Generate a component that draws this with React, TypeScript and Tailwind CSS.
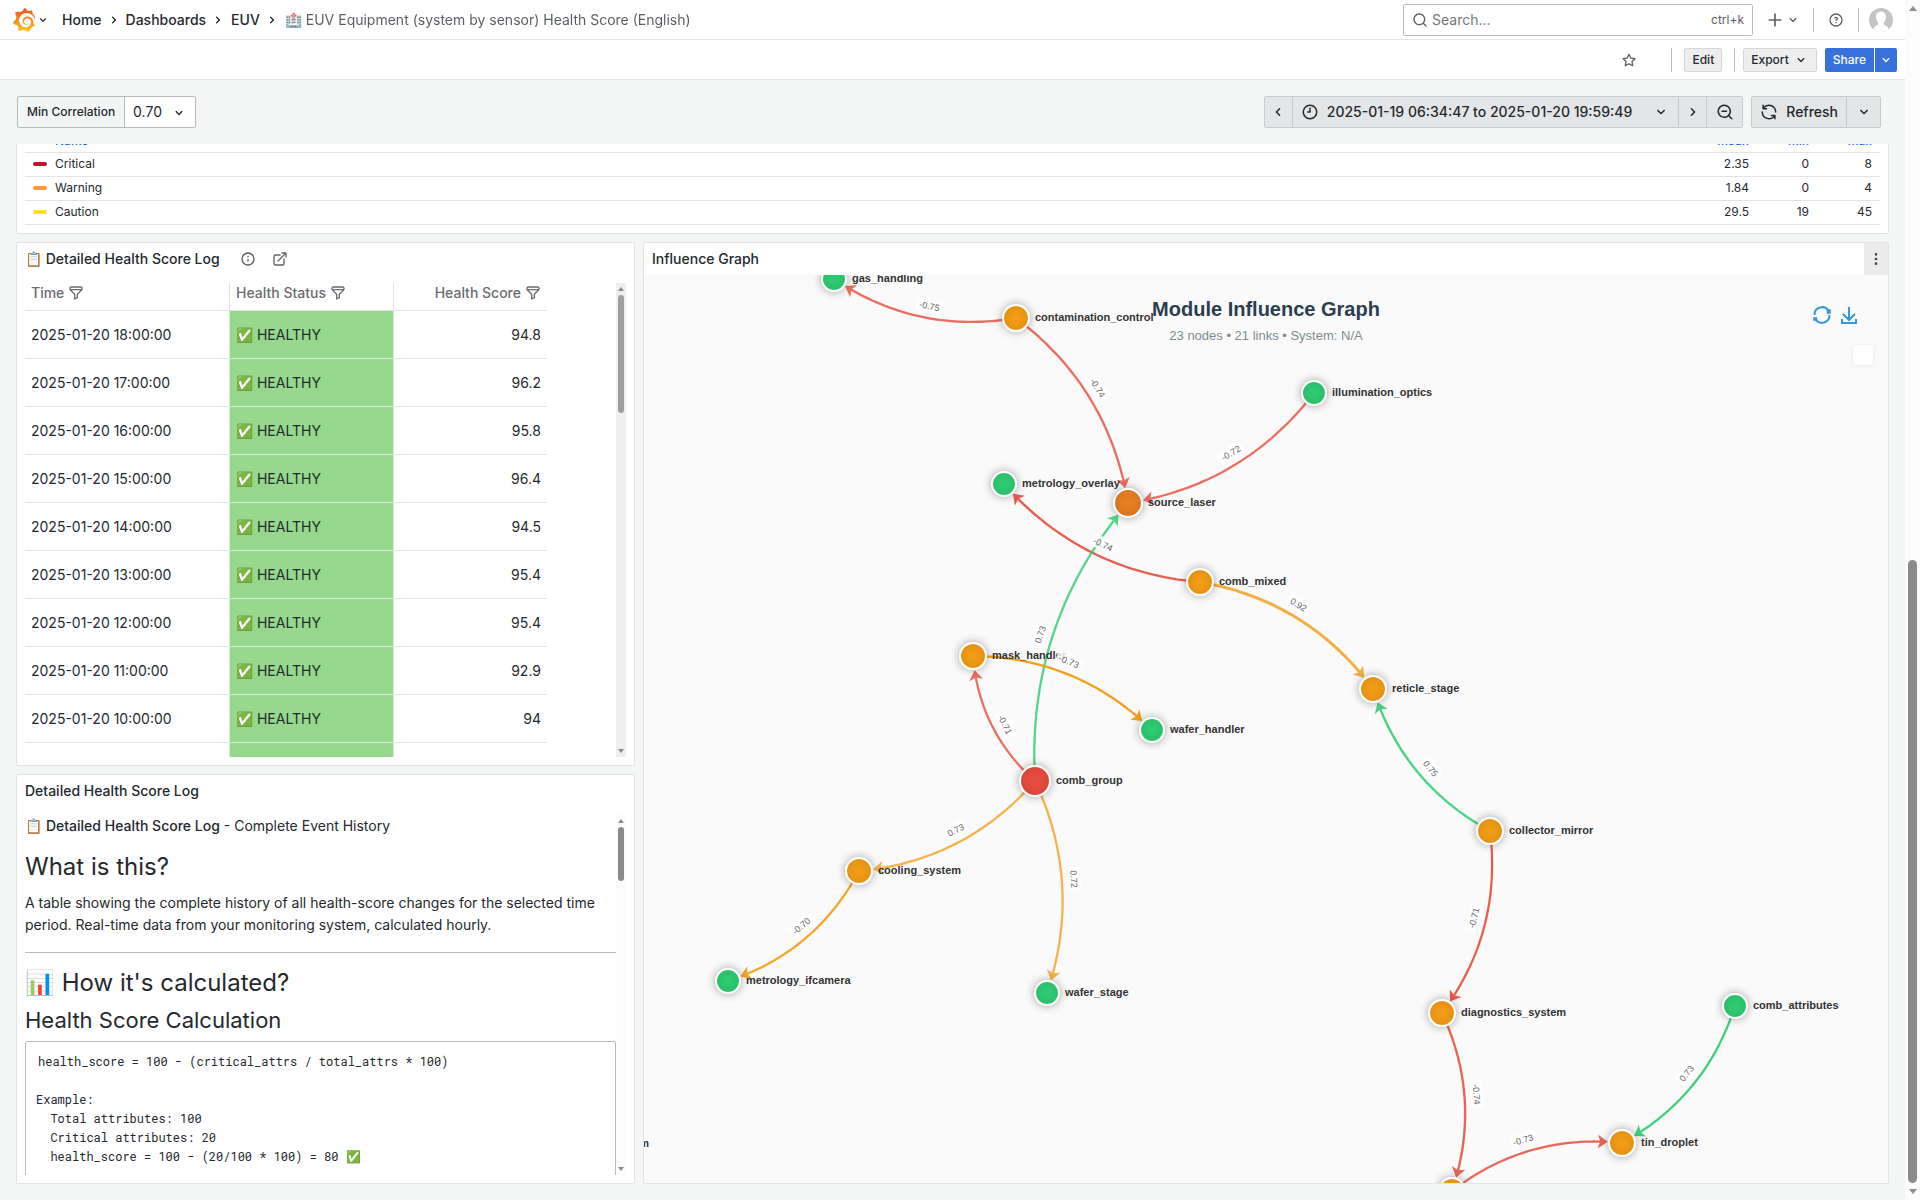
import { ReactNode } from 'react'
import { SiGrafana } from 'react-icons/si'

type GraphNode = { id: string; x: number; y: number; r: number; color: string }
type GraphEdge = { from: string; to: string; value: string; color: string; opacity: number }

const GREEN = '#2ecc71'
const ORANGE = '#f39c12'
const DARK_ORANGE = '#e67e22'
const RED = '#e74c3c'

const ICONS = {
  angleDown:
    'M17,9.17a1,1,0,0,0-1.41,0L12,12.71,8.46,9.17a1,1,0,0,0-1.41,0,1,1,0,0,0,0,1.42l4.24,4.24a1,1,0,0,0,1.42,0L17,10.59A1,1,0,0,0,17,9.17Z',
  angleLeft:
    'M11.29,12l3.54-3.54a1,1,0,0,0,0-1.41,1,1,0,0,0-1.42,0L9.17,11.29a1,1,0,0,0,0,1.42L13.41,17a1,1,0,0,0,.71.29,1,1,0,0,0,.71-.29,1,1,0,0,0,0-1.41Z',
  angleRight:
    'M14.83,11.29,10.59,7.05a1,1,0,0,0-1.42,0,1,1,0,0,0,0,1.41L12.71,12,9.17,15.54a1,1,0,0,0,0,1.41,1,1,0,0,0,.71.29,1,1,0,0,0,.71-.29l4.24-4.24A1,1,0,0,0,14.83,11.29Z',
  search:
    'M21.71,20.29,18,16.61A9,9,0,1,0,16.61,18l3.68,3.68a1,1,0,0,0,1.42,0A1,1,0,0,0,21.71,20.29ZM11,18a7,7,0,1,1,7-7A7,7,0,0,1,11,18Z',
  searchMinus:
    'M21.71,20.29,18,16.61A9,9,0,1,0,16.61,18l3.68,3.68a1,1,0,0,0,1.42,0A1,1,0,0,0,21.71,20.29ZM11,18a7,7,0,1,1,7-7A7,7,0,0,1,11,18ZM14,10H8a1,1,0,0,0,0,2h6a1,1,0,0,0,0-2Z',
  plus: 'M19,11H13V5a1,1,0,0,0-2,0v6H5a1,1,0,0,0,0,2h6v6a1,1,0,0,0,2,0V13h6a1,1,0,0,0,0-2Z',
  question:
    'M11.29,15.29a1.58,1.58,0,0,0-.12.15.76.76,0,0,0-.09.18.64.64,0,0,0-.06.18,1.36,1.36,0,0,0,0,.2.84.84,0,0,0,.08.38.9.9,0,0,0,.54.54.94.94,0,0,0,.76,0,.9.9,0,0,0,.54-.54A1,1,0,0,0,13,16a1,1,0,0,0-.29-.71A1,1,0,0,0,11.29,15.29ZM12,2A10,10,0,1,0,22,12,10,10,0,0,0,12,2Zm0,18a8,8,0,1,1,8-8A8,8,0,0,1,12,20ZM12,7A3,3,0,0,0,9.4,8.5a1,1,0,1,0,1.73,1A1,1,0,0,1,12,9a1,1,0,0,1,0,2,1,1,0,1,0,0,2,3,3,0,0,0,0-6Z',
  star: 'M22,9.67A1,1,0,0,0,21.14,9l-5.69-.83L12.9,3a1,1,0,0,0-1.8,0L8.55,8.16,2.86,9a1,1,0,0,0-.81.68,1,1,0,0,0,.25,1l4.13,4-1,5.68A1,1,0,0,0,6.9,21.44L12,18.77l5.1,2.67a.93.93,0,0,0,.46.12,1,1,0,0,0,.59-.19,1,1,0,0,0,.4-1l-1-5.68,4.13-4A1,1,0,0,0,22,9.67Zm-6.15,4a1,1,0,0,0-.29.88l.72,4.2-3.76-2a1.06,1.06,0,0,0-.94,0l-3.76,2,.72-4.2a1,1,0,0,0-.29-.88l-3-3,4.21-.61a1,1,0,0,0,.76-.55L12,5.7l1.88,3.82a1,1,0,0,0,.76.55l4.21.61Z',
  clock:
    'M12,2A10,10,0,1,0,22,12,10,10,0,0,0,12,2Zm0,18a8,8,0,1,1,8-8A8,8,0,0,1,12,20ZM12,6a1,1,0,0,0-1,1v4H9a1,1,0,0,0,0,2h3a1,1,0,0,0,1-1V7A1,1,0,0,0,12,6Z',
  sync: 'M19.91,15.51H15.38a1,1,0,0,0,0,2h2.4A8,8,0,0,1,4,12a1,1,0,0,0-2,0,10,10,0,0,0,16.88,7.23V21a1,1,0,0,0,2,0V16.5A1,1,0,0,0,19.91,15.51ZM12,2A10,10,0,0,0,5.12,4.77V3a1,1,0,0,0-2,0V7.5a1,1,0,0,0,1,1h4.5a1,1,0,0,0,0-2H6.22A8,8,0,0,1,20,12a1,1,0,0,0,2,0A10,10,0,0,0,12,2Z',
  filter:
    'M19,2H5A3,3,0,0,0,2,5V6.17a3,3,0,0,0,.25,1.2l0,.06a2.81,2.81,0,0,0,.59.86L9,14.41V21a1,1,0,0,0,.47.85A1,1,0,0,0,10,22a1,1,0,0,0,.45-.11l4-2A1,1,0,0,0,15,19V14.41l6.12-6.12a2.81,2.81,0,0,0,.59-.86l0-.06A3,3,0,0,0,22,6.17V5A3,3,0,0,0,19,2ZM13.29,13.29A1,1,0,0,0,13,14v4.38l-2,1V14a1,1,0,0,0-.29-.71L5.41,8H18.59ZM20,6H4V5A1,1,0,0,1,5,4H19a1,1,0,0,1,1,1Z',
  info: 'M12,2A10,10,0,1,0,22,12,10,10,0,0,0,12,2Zm0,18a8,8,0,1,1,8-8A8,8,0,0,1,12,20Zm0-8.5a1,1,0,0,0-1,1v3a1,1,0,0,0,2,0v-3A1,1,0,0,0,12,11.5Zm0-4a1.25,1.25,0,1,0,1.25,1.25A1.25,1.25,0,0,0,12,7.5Z',
  external:
    'M18,10.82a1,1,0,0,0-1,1V19a1,1,0,0,1-1,1H5a1,1,0,0,1-1-1V8A1,1,0,0,1,5,7h7.18a1,1,0,0,0,0-2H5A3,3,0,0,0,2,8V19a3,3,0,0,0,3,3H16a3,3,0,0,0,3-3V11.82A1,1,0,0,0,18,10.82Zm3.92-8.2a1,1,0,0,0-.54-.54A1,1,0,0,0,21,2H15a1,1,0,0,0,0,2h3.59L8.29,14.29a1,1,0,0,0,0,1.42,1,1,0,0,0,1.42,0L20,5.41V9a1,1,0,0,0,2,0V3A1,1,0,0,0,21.92,2.62Z',
  menu: 'M12,7a2,2,0,1,0-2-2A2,2,0,0,0,12,7Zm0,10a2,2,0,1,0,2,2A2,2,0,0,0,12,17Zm0-7a2,2,0,1,0,2,2A2,2,0,0,0,12,10Z',
}

const legend = [
  { name: 'Critical', swatch: 'bg-[#c4162a]', mean: '2.35', min: '0', max: '8' },
  { name: 'Warning', swatch: 'bg-[#ff9830]', mean: '1.84', min: '0', max: '4' },
  { name: 'Caution', swatch: 'bg-[#fade2a]', mean: '29.5', min: '19', max: '45' },
]

const logRows = [
  { time: '2025-01-20 18:00:00', score: '94.8' },
  { time: '2025-01-20 17:00:00', score: '96.2' },
  { time: '2025-01-20 16:00:00', score: '95.8' },
  { time: '2025-01-20 15:00:00', score: '96.4' },
  { time: '2025-01-20 14:00:00', score: '94.5' },
  { time: '2025-01-20 13:00:00', score: '95.4' },
  { time: '2025-01-20 12:00:00', score: '95.4' },
  { time: '2025-01-20 11:00:00', score: '92.9' },
  { time: '2025-01-20 10:00:00', score: '94' },
]

const nodes: GraphNode[] = [
  { id: 'gas_handling', x: 190, y: 4, r: 12, color: GREEN },
  { id: 'contamination_control', x: 372, y: 43, r: 13, color: ORANGE },
  { id: 'illumination_optics', x: 670, y: 118, r: 12, color: GREEN },
  { id: 'metrology_overlay', x: 360, y: 209, r: 12, color: GREEN },
  { id: 'source_laser', x: 484, y: 228, r: 14, color: DARK_ORANGE },
  { id: 'comb_mixed', x: 556, y: 307, r: 13, color: ORANGE },
  { id: 'mask_handler', x: 329, y: 381, r: 13, color: ORANGE },
  { id: 'reticle_stage', x: 729, y: 414, r: 13, color: ORANGE },
  { id: 'wafer_handler', x: 508, y: 455, r: 12, color: GREEN },
  { id: 'comb_group', x: 391, y: 506, r: 15, color: RED },
  { id: 'collector_mirror', x: 846, y: 556, r: 13, color: ORANGE },
  { id: 'cooling_system', x: 215, y: 596, r: 13, color: ORANGE },
  { id: 'metrology_ifcamera', x: 84, y: 706, r: 12, color: GREEN },
  { id: 'wafer_stage', x: 403, y: 718, r: 12, color: GREEN },
  { id: 'diagnostics_system', x: 798, y: 738, r: 13, color: ORANGE },
  { id: 'comb_attributes', x: 1091, y: 731, r: 12, color: GREEN },
  { id: 'tin_droplet', x: 978, y: 868, r: 13, color: ORANGE },
  { id: 'vacuum_system', x: 808, y: 916, r: 13, color: ORANGE },
]

const edges: GraphEdge[] = [
  { from: 'contamination_control', to: 'gas_handling', value: '-0.75', color: RED, opacity: 0.8 },
  { from: 'contamination_control', to: 'source_laser', value: '-0.74', color: RED, opacity: 0.8 },
  { from: 'illumination_optics', to: 'source_laser', value: '-0.72', color: RED, opacity: 0.8 },
  { from: 'comb_mixed', to: 'metrology_overlay', value: '-0.74', color: RED, opacity: 0.9 },
  { from: 'comb_group', to: 'source_laser', value: '0.73', color: GREEN, opacity: 0.8 },
  { from: 'comb_mixed', to: 'reticle_stage', value: '0.92', color: ORANGE, opacity: 0.8 },
  { from: 'mask_handler', to: 'wafer_handler', value: '-0.73', color: ORANGE, opacity: 0.95 },
  { from: 'comb_group', to: 'mask_handler', value: '-0.71', color: RED, opacity: 0.8 },
  { from: 'comb_group', to: 'cooling_system', value: '0.73', color: ORANGE, opacity: 0.75 },
  { from: 'comb_group', to: 'wafer_stage', value: '0.72', color: ORANGE, opacity: 0.75 },
  { from: 'cooling_system', to: 'metrology_ifcamera', value: '-0.70', color: ORANGE, opacity: 0.9 },
  { from: 'collector_mirror', to: 'reticle_stage', value: '0.75', color: GREEN, opacity: 0.85 },
  { from: 'collector_mirror', to: 'diagnostics_system', value: '-0.71', color: RED, opacity: 0.9 },
  { from: 'diagnostics_system', to: 'vacuum_system', value: '-0.74', color: RED, opacity: 0.85 },
  { from: 'vacuum_system', to: 'tin_droplet', value: '-0.73', color: RED, opacity: 0.85 },
  { from: 'comb_attributes', to: 'tin_droplet', value: '0.73', color: GREEN, opacity: 0.9 },
]

const CURVENESS = 0.2

function edgeGeometry(edge: GraphEdge) {
  const a = nodes.find((n) => n.id === edge.from)!
  const b = nodes.find((n) => n.id === edge.to)!
  const cx = (a.x + b.x) / 2 - (a.y - b.y) * CURVENESS
  const cy = (a.y + b.y) / 2 - (b.x - a.x) * CURVENESS
  const at = (t: number) => ({
    x: (1 - t) * (1 - t) * a.x + 2 * t * (1 - t) * cx + t * t * b.x,
    y: (1 - t) * (1 - t) * a.y + 2 * t * (1 - t) * cy + t * t * b.y,
  })

  // walk back from the target until the curve leaves its circle
  const leave = (gap: number) => {
    let t = 1
    while (t > 0.5 && Math.hypot(at(t).x - b.x, at(t).y - b.y) < b.r + gap) t -= 0.002
    return at(t)
  }
  const tip = leave(1)
  const tail = leave(8)
  const middle = at(0.5)
  const arrowAngle = (Math.atan2(tip.y - tail.y, tip.x - tail.x) * 180) / Math.PI

  const length = Math.hypot(b.x - a.x, b.y - a.y)
  const tx = (b.x - a.x) / length
  const ty = (b.y - a.y) / length
  const side = tx < 0 ? -1 : 1
  let labelAngle = (Math.atan2(ty, tx) * 180) / Math.PI
  if (b.x < a.x) labelAngle += 180

  const points = []
  for (let i = 0; i <= 40; i++) {
    const p = at(i / 40)
    if (Math.hypot(p.x - b.x, p.y - b.y) > b.r + 8) points.push(`${p.x.toFixed(1)},${p.y.toFixed(1)}`)
  }
  points.push(`${tail.x.toFixed(1)},${tail.y.toFixed(1)}`)

  return {
    path: 'M' + points.join('L'),
    width: Math.abs(Number(edge.value)) * 3.2,
    tip,
    arrowAngle,
    labelX: middle.x + ty * side * 12 - tx * 6,
    labelY: middle.y - tx * side * 12 - ty * 6,
    labelAngle,
  }
}

function Icon({ name, className = 'h-4 w-4' }: { name: keyof typeof ICONS; className?: string }) {
  return (
    <svg viewBox="0 0 24 24" fill="currentColor" aria-hidden="true" className={`shrink-0 ${className}`}>
      <path d={ICONS[name]} />
    </svg>
  )
}

function Panel({ className = '', children }: { className?: string; children: ReactNode }) {
  return (
    <section className={`flex flex-col overflow-hidden rounded-xs border border-[#e2e3e4] bg-white ${className}`}>
      {children}
    </section>
  )
}

function TopBar() {
  return (
    <header className="flex h-10 items-center justify-between border-b border-[#e2e3e4] bg-white px-3">
      <div className="flex items-center">
        <svg width="0" height="0" className="absolute">
          <linearGradient id="logo" x1="0" y1="1" x2="0" y2="0">
            <stop offset="0" stopColor="#fcc618" />
            <stop offset="0.5" stopColor="#f58b1f" />
            <stop offset="1" stopColor="#ee4f27" />
          </linearGradient>
        </svg>
        <button className="flex items-center" aria-label="Open menu">
          <SiGrafana className="h-6 w-6" fill="url(#logo)" />
          <Icon name="angleDown" className="h-3.5 w-3.5" />
        </button>
        <nav className="ml-3 flex items-center text-sm">
          <a href="#home" className="font-medium">Home</a>
          <Icon name="angleRight" className="mx-1 h-4 w-4" />
          <a href="#dashboards" className="font-medium">Dashboards</a>
          <Icon name="angleRight" className="mr-[5px] ml-1 h-4 w-4" />
          <a href="#euv" className="font-medium">EUV</a>
          <Icon name="angleRight" className="mr-[5px] ml-1 h-4 w-4" />
          <span className="opacity-75">🏥 EUV Equipment (system by sensor) Health Score (English)</span>
        </nav>
      </div>

      <div className="flex items-center text-[#5f6063]">
        <label className="flex h-8 w-[350px] items-center gap-1 rounded-xs border border-[#b8babd] bg-white px-2">
          <Icon name="search" />
          <input
            className="min-w-0 flex-1 text-sm outline-none placeholder:text-[#76777a]"
            placeholder="Search..."
            aria-label="Search"
          />
          <span className="text-xs">ctrl+k</span>
        </label>
        <button className="ml-3 flex items-center" aria-label="New">
          <Icon name="plus" className="h-5 w-5" />
          <Icon name="angleDown" />
        </button>
        <span className="ml-3 h-6 w-px bg-[#b8babd]" />
        <button className="mx-3.5" aria-label="Help">
          <Icon name="question" />
        </button>
        <span className="h-6 w-px bg-[#b8babd]" />
        <button className="ml-2.5 h-6 w-6 overflow-hidden rounded-full" aria-label="Profile">
          <svg viewBox="0 0 24 24" className="h-6 w-6">
            <rect width="24" height="24" fill="#c4c4c4" />
            <path
              d="M12 3.5c3.2 0 5 2.4 5 5.4 0 2.6-1 4.6-2.2 5.6-.3 1.5.1 2.3 1.5 2.9 1.6.7 2.7 1.6 3.2 3.6V24h-15v-3c.5-2 1.6-2.9 3.2-3.6 1.4-.6 1.8-1.4 1.5-2.9C8 13.5 7 11.5 7 8.9c0-3 1.8-5.4 5-5.4Z"
              fill="#fff"
            />
          </svg>
        </button>
      </div>
    </header>
  )
}

function ActionBar() {
  return (
    <div className="flex h-10 items-center justify-end border-b border-[#e2e3e4] bg-white pr-2 text-xs font-medium">
      <button className="mr-[34px] text-[#5f6063]" aria-label="Mark as favorite">
        <Icon name="star" />
      </button>
      <span className="mr-3 h-6 w-px bg-[#b8babd]" />
      <button className="h-6 rounded-xs border border-[#d6d7d8] bg-[#eeeeee] px-[7px]">Edit</button>
      <span className="mr-2 ml-3 h-6 w-px bg-[#b8babd]" />
      <button className="flex h-6 items-center gap-1 rounded-xs border border-[#d6d7d8] bg-[#eeeeee] px-[7px]">
        Export <Icon name="angleDown" />
      </button>
      <button className="ml-2 h-6 rounded-l-xs bg-[#3871dc] px-2 text-white">Share</button>
      <button className="ml-px grid h-6 w-[22px] place-items-center rounded-r-xs bg-[#3871dc] text-white" aria-label="Share options">
        <Icon name="angleDown" />
      </button>
    </div>
  )
}

function Controls() {
  return (
    <div className="flex h-16 items-center justify-between pr-6 pl-[17px]">
      <div className="flex h-8 items-center overflow-hidden rounded-xs border border-[#b8babd]">
        <label htmlFor="min-correlation" className="px-[9px] text-xs font-medium">
          Min Correlation
        </label>
        <div className="relative h-full border-l border-[#b8babd] bg-white">
          <select id="min-correlation" className="h-full w-[70px] appearance-none px-2 text-sm outline-none">
            <option>0.70</option>
          </select>
          <Icon name="angleDown" className="pointer-events-none absolute top-2 right-2 h-4 w-4" />
        </div>
      </div>

      <div className="flex gap-2 text-sm font-medium">
        <div className="flex h-8 divide-x divide-[#c9cacc] rounded-xs border border-[#c9cacc] bg-[#e4e5e6]">
          <button className="grid w-7 place-items-center" aria-label="Move time range back">
            <Icon name="angleLeft" className="h-[18px] w-[18px]" />
          </button>
          <button className="flex items-center px-2">
            <Icon name="clock" className="h-[18px] w-[18px]" />
            <span className="mr-5 ml-2">2025-01-19 06:34:47 to 2025-01-20 19:59:49</span>
            <Icon name="angleDown" className="h-[18px] w-[18px]" />
          </button>
          <button className="grid w-7 place-items-center" aria-label="Move time range forward">
            <Icon name="angleRight" className="h-[18px] w-[18px]" />
          </button>
          <button className="grid w-[35px] place-items-center" aria-label="Zoom out">
            <Icon name="searchMinus" className="h-[18px] w-[18px]" />
          </button>
        </div>
        <div className="flex h-8 divide-x divide-[#c9cacc] rounded-xs border border-[#c9cacc] bg-[#e4e5e6]">
          <button className="flex items-center gap-2 px-2">
            <Icon name="sync" className="h-[18px] w-[18px]" />
            Refresh
          </button>
          <button className="grid w-[33px] place-items-center" aria-label="Refresh interval">
            <Icon name="angleDown" className="h-[18px] w-[18px]" />
          </button>
        </div>
      </div>
    </div>
  )
}

function LegendPanel() {
  return (
    <Panel className="-mt-6 px-2 pt-1.5 pb-2">
      <table className="w-full text-xs">
        <thead>
          <tr className="h-[25px] border-b border-[#e2e3e4] align-bottom text-[#1f62e0]">
            <th className="pb-[3px] pl-[30px] text-left font-medium">Name</th>
            <th className="pr-2 pb-[3px] text-right font-medium">mean</th>
            <th className="w-[60px] pr-2 pb-[3px] text-right font-medium">min</th>
            <th className="w-[63px] pr-2 pb-[3px] text-right font-medium">max</th>
          </tr>
        </thead>
        <tbody>
          {legend.map((row) => (
            <tr key={row.name} className="h-6 border-b border-[#e2e3e4]">
              <td className="pl-2">
                <span className="flex items-center gap-2">
                  <span className={`h-1 w-3.5 rounded-full ${row.swatch}`} />
                  {row.name}
                </span>
              </td>
              <td className="pr-2 text-right">{row.mean}</td>
              <td className="pr-2 text-right">{row.min}</td>
              <td className="pr-2 text-right">{row.max}</td>
            </tr>
          ))}
        </tbody>
      </table>
    </Panel>
  )
}

function Scrollbar({ track, thumb }: { track: string; thumb: string }) {
  return (
    <div className={`flex w-2.5 shrink-0 flex-col items-center ${track}`}>
      <span className="mt-1 mb-1 border-x-3 border-b-4 border-x-transparent border-b-[#8b8b8b]" />
      <span className={`w-1.5 rounded-full ${thumb}`} />
      <span className="mt-auto mb-1 border-x-3 border-t-4 border-x-transparent border-t-[#8b8b8b]" />
    </div>
  )
}

function LogPanel() {
  return (
    <Panel className="h-[524px]">
      <div className="flex h-8 shrink-0 items-center px-2">
        <h2 className="text-sm font-medium">📋 Detailed Health Score Log</h2>
        <button className="ml-5 text-[#5f6063]" aria-label="Panel description">
          <Icon name="info" />
        </button>
        <a href="#log" className="ml-4 text-[#5f6063]" aria-label="Open panel link">
          <Icon name="external" />
        </a>
      </div>
      <div className="m-2 flex min-h-0 flex-1 justify-between overflow-hidden">
        <div className="w-[522px]">
          <table className="w-full table-fixed border-separate border-spacing-0 text-sm">
            <thead>
              <tr className="h-7 text-[#6b6c6f]">
                <th className="w-[205px] border-r border-b border-[#e2e3e4] px-1.5 pb-[7px] font-medium">
                  <span className="flex items-center gap-1">Time <Icon name="filter" /></span>
                </th>
                <th className="w-[164px] border-r border-b border-[#e2e3e4] px-1.5 pb-[7px] font-medium">
                  <span className="flex items-center gap-1">Health Status <Icon name="filter" /></span>
                </th>
                <th className="border-b border-[#e2e3e4] px-1.5 pb-[7px] font-medium">
                  <span className="flex items-center justify-end gap-1">Health Score <Icon name="filter" /></span>
                </th>
              </tr>
            </thead>
            <tbody>
              {logRows.map((row) => (
                <tr key={row.time} className="h-12">
                  <td className="border-r border-b border-[#e2e3e4] px-1.5 pt-0.5">{row.time}</td>
                  <td className="border-r border-b border-[#e2e3e4] bg-[#96d98d] px-1.5 pt-0.5">✅ HEALTHY</td>
                  <td className="border-b border-[#e2e3e4] px-1.5 pt-0.5 text-right">{row.score}</td>
                </tr>
              ))}
              <tr className="h-12">
                <td className="border-r border-[#e2e3e4]" />
                <td className="border-r border-[#e2e3e4] bg-[#96d98d]" />
                <td />
              </tr>
            </tbody>
          </table>
        </div>
        <Scrollbar track="bg-[#efefef]" thumb="h-[118px] bg-[#9e9e9e]" />
      </div>
    </Panel>
  )
}

function HelpPanel() {
  return (
    <Panel className="h-[410px]">
      <h2 className="flex h-8 shrink-0 items-center px-2 text-sm font-medium">Detailed Health Score Log</h2>
      <div className="m-2 flex min-h-0 flex-1 overflow-hidden">
        <div className="min-w-0 flex-1 text-sm leading-[22px]">
          <p>
            📋 <strong className="font-medium">Detailed Health Score Log</strong> - Complete Event History
          </p>
          <h2 className="mt-4 text-2xl leading-7">What is this?</h2>
          <p className="mt-[11px]">
            A table showing the complete history of all health-score changes for the selected time period. Real-time data
            from your monitoring system, calculated hourly.
          </p>
          <hr className="mt-4 mb-4 border-[#b8babd]" />
          <h2 className="text-2xl leading-7">📊 How it's calculated?</h2>
          <h3 className="mt-[9px] text-[22px] leading-7">Health Score Calculation</h3>
          <pre className="mt-[7px] h-60 rounded-xs border border-[#b8babd] p-2.5 font-['Roboto_Mono','Liberation_Mono',monospace] text-xs leading-[19px]">
            <code className="pl-0.5 font-['Roboto_Mono','Liberation_Mono',monospace]">
              {`health_score = 100 - (critical_attrs / total_attrs * 100)

Example:
  Total attributes: 100
  Critical attributes: 20
  health_score = 100 - (20/100 * 100) = 80 ✅`}
            </code>
          </pre>
        </div>
        <Scrollbar track="bg-[#fbfbfb]" thumb="h-[54px] bg-[#8b8b8b]" />
      </div>
    </Panel>
  )
}

function InfluenceGraph() {
  const drawn = edges.map((edge) => ({ ...edge, ...edgeGeometry(edge) }))

  return (
    <svg viewBox="0 0 1244 908" className="block w-full bg-[#fafafa] font-['Liberation_Sans',sans-serif]">
      <defs>
        <filter id="glow" x="-100%" y="-100%" width="300%" height="300%">
          <feDropShadow dx="0" dy="0" stdDeviation="4" floodColor="#000" floodOpacity="0.3" />
        </filter>
        <filter id="soft" x="-50%" y="-50%" width="200%" height="200%">
          <feDropShadow dx="0" dy="1" stdDeviation="2" floodColor="#000" floodOpacity="0.08" />
        </filter>
      </defs>

      {drawn.map((edge) => (
        <g key={edge.from + edge.to} opacity={edge.opacity}>
          <path d={edge.path} fill="none" stroke={edge.color} strokeWidth={edge.width} />
          <path
            d="M0 0L-10 7L-7.5 0L-10 -7Z"
            fill={edge.color}
            transform={`translate(${edge.tip.x} ${edge.tip.y}) rotate(${edge.arrowAngle})`}
          />
        </g>
      ))}

      {nodes.map((node) => (
        <g key={node.id}>
          <circle cx={node.x} cy={node.y} r={node.r} fill={node.color} filter="url(#glow)" />
          <circle cx={node.x} cy={node.y} r={node.r} fill="none" stroke="#fff" strokeWidth="2" filter="url(#glow)" />
        </g>
      ))}

      {nodes
        .filter((node) => node.y < 900)
        .map((node) => (
          <text key={node.id} x={node.x + node.r + 6} y={node.y + 3} fontSize="11" fontWeight="bold" fill="#333">
            {node.id}
          </text>
        ))}
      <text x="5" y="872" fontSize="11" fontWeight="bold" fill="#333" textAnchor="end">m</text>

      {drawn.map((edge) => {
        const w = edge.value.length > 4 ? 27 : 24
        return (
          <g
            key={edge.from + edge.to}
            transform={`translate(${edge.labelX} ${edge.labelY}) rotate(${edge.labelAngle})`}
          >
            <rect x={-w / 2} y="-7" width={w} height="13" rx="3" fill="#fff" fillOpacity="0.8" />
            <text y="3" fontSize="9" fill="#666" textAnchor="middle">{edge.value}</text>
          </g>
        )
      })}

      <text x="622" y="41" fontSize="20" fontWeight="bold" fill="#2c3e50" textAnchor="middle">
        Module Influence Graph
      </text>
      <text x="622" y="65" fontSize="13" fill="#7f8c8d" textAnchor="middle">
        23 nodes • 21 links • System: N/A
      </text>

      <g fill="none" stroke="#3498db" strokeWidth="2">
        <path d="M1170.5 40A7.5 7.5 0 0 1 1184.5 36" />
        <path d="M1185.5 40A7.5 7.5 0 0 1 1171.5 44" />
        <path d="M1183 34.5H1186.5V38.5H1183ZM1169.5 42.5H1173V45.5H1169.5Z" fill="#3498db" strokeWidth="0.5" />
        <path d="M1205 32V45M1199 39L1205 45L1211 39M1198 44V48H1212V44" />
      </g>
      <rect x="1209" y="70" width="20" height="20" rx="4" fill="#fff" filter="url(#soft)" />
    </svg>
  )
}

function GraphPanel() {
  return (
    <Panel className="col-span-2">
      <div className="flex h-8 shrink-0 items-center justify-between pl-2">
        <h2 className="text-sm font-medium">Influence Graph</h2>
        <button className="grid h-8 w-6 place-items-center bg-[#ececec] text-[#404144]" aria-label="Panel menu">
          <Icon name="menu" />
        </button>
      </div>
      <InfluenceGraph />
    </Panel>
  )
}

export default function App() {
  return (
    <div className="flex h-screen overflow-hidden bg-[#f4f5f5] font-['Inter',sans-serif] text-[#24292e]">
      <div className="min-w-0 flex-1">
        <TopBar />
        <ActionBar />
        <Controls />
        <main className="overflow-hidden px-4 pb-4">
          <LegendPanel />
          <div className="mt-2 grid grid-cols-3 gap-2">
            <div className="flex flex-col gap-2">
              <LogPanel />
              <HelpPanel />
            </div>
            <GraphPanel />
          </div>
        </main>
      </div>
      <div className="flex w-[15px] flex-col items-center bg-[#fcfcfc]">
        <span className="mt-1.5 border-x-4 border-b-5 border-x-transparent border-b-[#8b8b8b]" />
        <span className="mt-auto h-[623px] w-[9px] rounded-full bg-[#8b8b8b]" />
        <span className="mt-1.5 mb-1.5 border-x-4 border-t-5 border-x-transparent border-t-[#8b8b8b]" />
      </div>
    </div>
  )
}
